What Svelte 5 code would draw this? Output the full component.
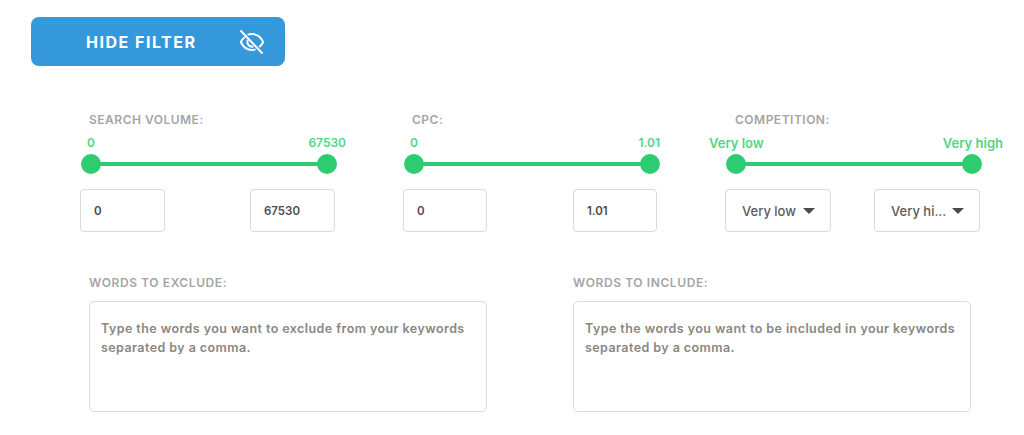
<script>
  const ranges = [
    { label: 'SEARCH VOLUME:', min: '0', max: '67530' },
    { label: 'CPC:', min: '0', max: '1.01' },
  ];
  const boxes = [
    { label: 'WORDS TO EXCLUDE:', text: 'Type the words you want to exclude from your keywords separated by a comma.' },
    { label: 'WORDS TO INCLUDE:', text: 'Type the words you want to be included in your keywords separated by a comma.' },
  ];
</script>

{#snippet slider(min, max)}
  <div class="values">
    <span>{min}</span>
    <span>{max}</span>
  </div>
  <div class="track">
    <i class="thumb left"></i>
    <i class="thumb right"></i>
  </div>
{/snippet}

<div class="page">
  <button class="toggle">
    <span>HIDE FILTER</span>
    <svg width="26" height="26" viewBox="0 0 26 26" fill="none" stroke="#fff" stroke-width="2" stroke-linecap="round" stroke-linejoin="round">
      <path d="M5.500 8.500C3.800 9.700 2.500 11.300 1.800 13c2.400 5 6.500 8 11.200 8 .9 0 1.800-.1 2.700-.4" />
      <path d="M9.500 5.400c1.100-.3 2.300-.4 3.500-.4 4.700 0 8.800 3 11.200 8-.8 1.700-2 3.300-3.400 4.500" />
      <path d="M8.600 11.500a4.800 4.800 0 0 0 4.900 6.300" />
      <path d="M2 2l21 22" />
    </svg>
  </button>

  <div class="filters">
    {#each ranges as r}
      <div class="col">
        <div class="label">{r.label}</div>
        {@render slider(r.min, r.max)}
        <div class="inputs">
          <div class="field">{r.min}</div>
          <div class="field">{r.max}</div>
        </div>
      </div>
    {/each}
    <div class="col">
      <div class="label">COMPETITION:</div>
      {@render slider('Very low', 'Very high')}
      <div class="inputs">
        <div class="select"><span>Very low</span><i class="caret"></i></div>
        <div class="select"><span>Very hi...</span><i class="caret"></i></div>
      </div>
    </div>
  </div>

  <div class="words">
    {#each boxes as b}
      <div class="word">
        <div class="label">{b.label}</div>
        <div class="area">{b.text}</div>
      </div>
    {/each}
  </div>
</div>

<style>
  :global(body) {
    background: #fff;
  }

  .page {
    height: 435px;
    overflow: hidden;
    padding: 17px 0 0 31px;
    box-sizing: border-box;
    font-family: Inter, "Open Sans", sans-serif;
  }

  .toggle {
    display: flex;
    align-items: center;
    width: 254px;
    height: 49px;
    padding: 0 20px 0 55px;
    justify-content: space-between;
    background: #3498db;
    border: 0;
    border-radius: 8px;
    color: #fff;
    font-family: inherit;
    font-size: 16px;
    font-weight: 700;
    letter-spacing: 1.5px;
  }

  .filters {
    display: grid;
    grid-template-columns: 255px 254px 255px;
    column-gap: 68px;
    margin: 46px 0 0 49px;
  }

  .label {
    font-size: 12px;
    font-weight: 600;
    line-height: 16px;
    letter-spacing: 0.6px;
    color: #a5a5a5;
  }

  .col > .label {
    padding-left: 9px;
    letter-spacing: 0.5px;
  }

  .col:last-child > .label {
    padding-left: 10px;
  }

  .values {
    display: flex;
    justify-content: space-between;
    margin: 7px -23px 0 -16px;
    height: 16px;
    font-size: 13px;
    font-weight: 600;
    line-height: 16px;
    color: #4fd587;
  }

  .col:nth-child(1) .values {
    margin: 7px -11px 0 7px;
    font-size: 12px;
  }

  .col:nth-child(2) .values {
    margin: 7px -3px 0 7px;
    font-size: 12px;
  }

  .track {
    position: relative;
    height: 4px;
    margin: 11px 8.5px 0 10.5px;
    background: #2ecc71;
  }

  .col:nth-child(2) .track {
    margin-right: 7.5px;
  }

  .thumb {
    position: absolute;
    top: -8px;
    width: 20px;
    height: 20px;
    border-radius: 50%;
    background: #2ecc71;
  }

  .left {
    left: -10px;
  }

  .right {
    right: -10px;
  }

  .inputs {
    display: flex;
    justify-content: space-between;
    margin-top: 23px;
  }

  .field,
  .select {
    box-sizing: border-box;
    height: 43px;
    border: 1px solid #d9d9d9;
    border-radius: 4px;
    display: flex;
    align-items: center;
    font-size: 11.5px;
    font-weight: 600;
    color: #4a4a4a;
  }

  .field {
    width: 85px;
    padding-left: 13px;
  }

  .col:nth-child(2) .field {
    width: 84px;
  }

  .select {
    width: 106px;
    justify-content: space-between;
    padding: 0 15px 0 16px;
    font-size: 13px;
    font-weight: 500;
    color: #5c5c5c;
  }

  .caret {
    width: 0;
    height: 0;
    border-left: 6px solid transparent;
    border-right: 6px solid transparent;
    border-top: 6px solid #4a4a4a;
  }

  .words {
    display: grid;
    grid-template-columns: 398px 398px;
    column-gap: 86px;
    margin: 43px 0 0 58px;
  }

  .area {
    box-sizing: border-box;
    height: 111px;
    margin-top: 10px;
    padding: 18px 11px;
    border: 1px solid #dcdcdc;
    border-radius: 5px;
    font-size: 12.5px;
    font-weight: 600;
    letter-spacing: 0.43px;
    line-height: 18.5px;
    color: #8a8682;
  }
</style>
